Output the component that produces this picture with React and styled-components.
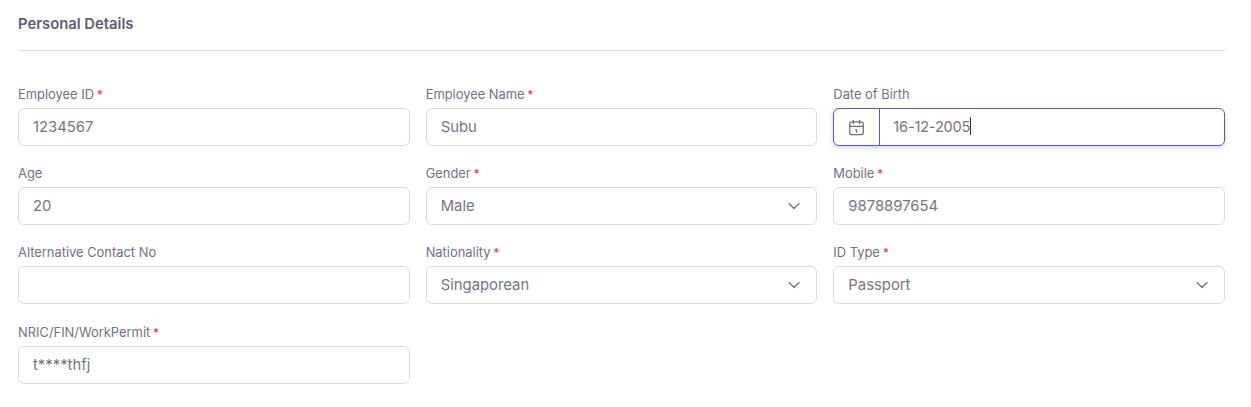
import React from "react";
import styled, { createGlobalStyle } from "styled-components";

const Global = createGlobalStyle`
  html, body { margin: 0; padding: 0; background: #fff; }
  body { font-family: Inter, "Noto Sans", "Liberation Sans", sans-serif; overflow: hidden; }
`;

const Page = styled.div`
  width: 1251px;
  height: 407px;
  box-sizing: border-box;
  background: #fff;
  border-right: 2px solid #f8f8f9;
  padding: 14px 24px 0 18px;
`;

const Title = styled.h2`
  margin: 0 0 34px;
  font-size: 14.8px;
  line-height: 20px;
  font-weight: 600;
  color: #625e72;
  padding-bottom: 16px;
  border-bottom: 1px solid #dbdade;
`;

const Grid = styled.div`
  display: grid;
  grid-template-columns: repeat(3, 1fr);
  column-gap: 16px;
  row-gap: 18.2px;
`;

const Field = styled.div`
  display: flex;
  flex-direction: column;
  min-width: 0;
`;

const Label = styled.label`
  font-size: 12.9px;
  line-height: 19px;
  height: 18px;
  margin-bottom: 5px;
  color: #74708a;
`;

const Req = styled.span`
  color: #f02a2a;
  font-size: 11.5px;
  margin-left: 3px;
`;

const Control = styled.div`
  height: 38px;
  box-sizing: border-box;
  display: flex;
  align-items: center;
  border-radius: 6px;
  background: #fff;
  border: 1px solid ${p => (p.$focus ? "#5a55cf" : "#dbdade")};
  box-shadow: ${p => (p.$focus ? "0 2px 5px rgba(90, 85, 207, 0.25)" : "none")};
  color: #777386;
  font-size: 14.85px;
  padding-right: 15px;
`;

const Value = styled.span`
  padding-left: 14px;
  flex: 1;
  line-height: 20px;
  white-space: nowrap;
`;

const DateValue = styled(Value)`
  padding-left: 13px;
  letter-spacing: -0.2px;
  font-size: 14.6px;
`;

const AddOn = styled.span`
  width: 45px;
  height: 100%;
  flex: none;
  display: flex;
  align-items: center;
  justify-content: center;
  border-right: 1px solid #5a55cf;
  color: #6f6b7d;
`;

const Caret = styled.span`
  display: inline-block;
  width: 1px;
  height: 18px;
  background: #33304a;
  vertical-align: -3px;
`;

const CalendarIcon = () => (
  <svg width="19" height="19" viewBox="0 0 24 24" fill="none" stroke="currentColor" strokeWidth="1.6" strokeLinecap="round" strokeLinejoin="round">
    <rect x="3.5" y="5" width="17" height="16" rx="2.5" />
    <path d="M16 3v4M8 3v4M3.5 10.5h17M11 15h1v3" />
  </svg>
);

const Chevron = () => (
  <svg width="14" height="14" viewBox="0 0 14 14" fill="none" stroke="#6f6b7d" strokeWidth="1.2" strokeLinecap="round" strokeLinejoin="round">
    <path d="M2 4.5l5 5 5-5" />
  </svg>
);

const TextField = ({ label, required, value, select }) => (
  <Field>
    <Label>
      {label}
      {required && <Req>*</Req>}
    </Label>
    <Control>
      <Value>{value}</Value>
      {select && <Chevron />}
    </Control>
  </Field>
);

export default function App() {
  return (
    <Page>
      <Global />
      <Title>Personal Details</Title>
      <Grid>
        <TextField label="Employee ID" required value="1234567" />
        <TextField label="Employee Name" required value="Subu" />
        <Field>
          <Label>Date of Birth</Label>
          <Control $focus>
            <AddOn>
              <CalendarIcon />
            </AddOn>
            <DateValue>
              16-12-2005
              <Caret />
            </DateValue>
          </Control>
        </Field>
        <TextField label="Age" value="20" />
        <TextField label="Gender" required value="Male" select />
        <TextField label="Mobile" required value="9878897654" />
        <TextField label="Alternative Contact No" />
        <TextField label="Nationality" required value="Singaporean" select />
        <TextField label="ID Type" required value="Passport" select />
        <TextField label="NRIC/FIN/WorkPermit" required value="t****thfj" />
      </Grid>
    </Page>
  );
}
